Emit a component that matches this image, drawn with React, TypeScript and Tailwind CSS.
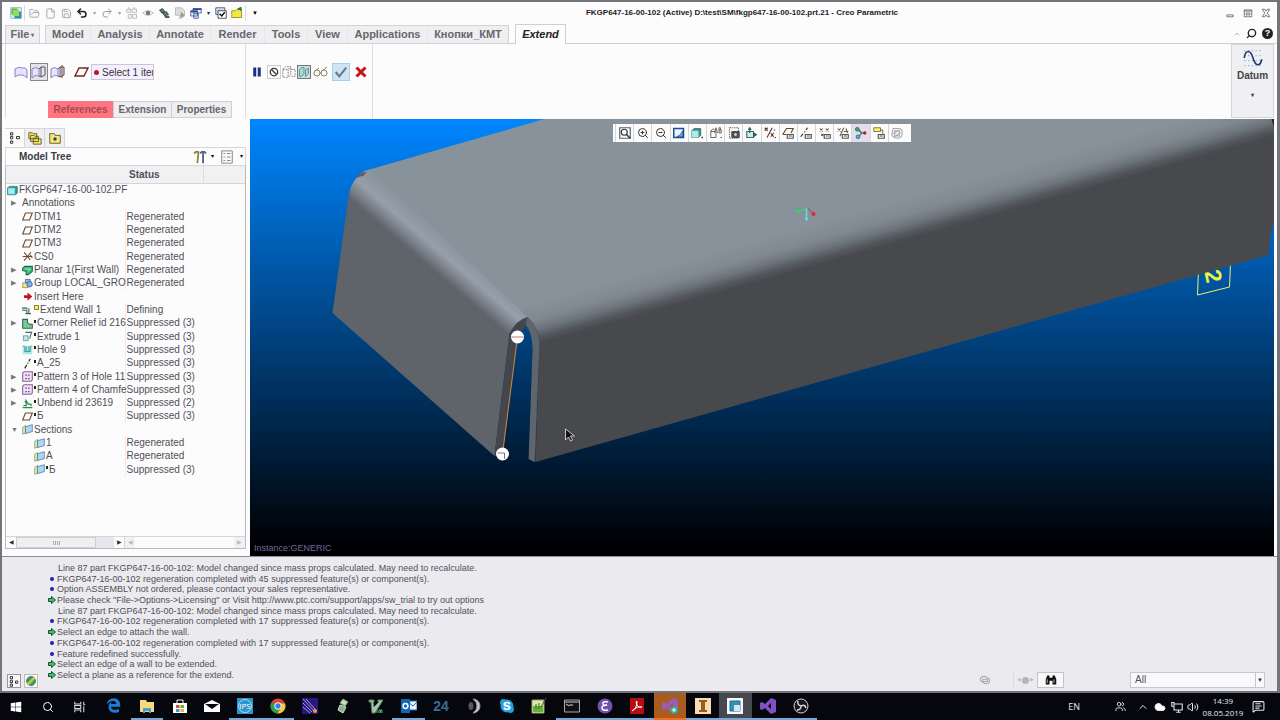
import React from 'react';
import clsx from 'clsx';
import { FaWindows, FaSkype, FaEdgeLegacy } from 'react-icons/fa';
import { Search, ChevronUp, Cloud, Volume2, Users, MessageSquareText, ZoomIn, ZoomOut, Undo2, Redo2, File, Save, FolderOpen } from 'lucide-react';

type IconProps = { children: React.ReactNode; className?: string };

function Icon({ children, className = 'h-4 w-4' }: IconProps) {
  return (
    <svg viewBox="0 0 16 16" fill="none" stroke="#333" strokeWidth="1" className={clsx('shrink-0', className)} aria-hidden="true">
      {children}
    </svg>
  );
}

/* ---------- title bar ---------- */

const Divider = () => <span className="h-4 w-px bg-[#dcdce0]" />;

function QuickAccess() {
  const btn = 'flex h-4 w-4 items-center justify-center';
  const caret = 'w-[9px] text-center text-[6px]';
  return (
    <div className="flex items-center">
      <button aria-label="Window" className={clsx(btn, 'ml-px')}>
        <Icon className="h-3 w-3">
          <rect x="1" y="1" width="14" height="14" fill="#dcecf5" stroke="#7fa3c4" />
          <path d="M2 2h8v8H2z" fill="#5fb52f" stroke="none" />
          <path d="M6 6h9v9H6z" fill="#2b9c9c" stroke="none" />
          <path d="M4 4h8v8H4z" fill="#98d86a" stroke="none" />
        </Icon>
      </button>
      <Divider />
      <button aria-label="Open" className={clsx(btn, 'ml-px')}><FolderOpen size={11} color="#a3a3a3" /></button>
      <button aria-label="New" className={btn}><File size={11} color="#a3a3a3" /></button>
      <button aria-label="Save" className={btn}><Save size={11} color="#a3a3a3" /></button>
      <button aria-label="Undo" className={btn}><Undo2 size={12} color="#222" strokeWidth={3} /></button>
      <span className={clsx(caret, 'text-gray-400')}>▾</span>
      <button aria-label="Redo" className={btn}><Redo2 size={12} color="#999" /></button>
      <span className={clsx(caret, 'text-gray-400')}>▾</span>
      <button aria-label="Regenerate" className={btn}>
        <Icon className="h-3 w-3"><path d="M1 3h5v4H1zM8 3h6v4H8zM3 10h4v5H3zM9 10h5v5H9zM4 0v3M11 0v3" stroke="#aaa" /></Icon>
      </button>
      <button aria-label="Hide" className={btn}>
        <Icon className="h-3 w-3"><path d="M1 8q7-6 14 0q-7 6-14 0z" stroke="#aaa" /><circle cx="8" cy="8" r="3" fill="#777" stroke="none" /></Icon>
      </button>
      <button aria-label="Layers" className={btn}>
        <Icon className="h-3 w-3"><path d="M2 4l4-2 3 4-4 2zM6 8l5-2 3 4-5 2zM9 13l5-1 1 2h-5z" fill="#5d7a74" stroke="#2c3634" /></Icon>
      </button>
      <button aria-label="Edit" className={btn}>
        <Icon className="h-3 w-3"><path d="M2 1h8l4 4v7l-5 3H7l2-4H2z" fill="#ddd" stroke="#aaa" /><path d="M9 6l5 5-5 4z" fill="#999" stroke="none" /></Icon>
      </button>
      <button aria-label="Windows" className={btn}>
        <Icon className="h-3 w-3"><path d="M4 2h11v6H4zM1 5h9v7H1zM5 9h6v6H5z" fill="#e8f0ff" stroke="#294a8a" /><path d="M4 2h11v2H4zM1 5h9v2H1z" fill="#294a8a" stroke="none" /></Icon>
      </button>
      <span className={clsx(caret, 'text-gray-800')}>▾</span>
      <button aria-label="Close window" className={btn}>
        <Icon className="h-3 w-3"><path d="M1 1h12v9H1z" fill="#cfe0f5" stroke="#345" /><path d="M4 5h11v10H4z" fill="#fff" stroke="#222" /><path d="M6 9l3 3 4-5" stroke="#111" strokeWidth="2" /></Icon>
      </button>
      <button aria-label="Working directory" className={btn}>
        <Icon className="h-3 w-3"><path d="M1 5h5l2-2h6v11H1z" fill="#f3e64a" stroke="#8a7c12" /><path d="M9 3l4-2v4" stroke="#287a28" strokeWidth="2" /></Icon>
      </button>
      <Divider />
      <button aria-label="Customize" className="ml-1.5 text-[6px] text-black">▼</button>
    </div>
  );
}

function TitleBar() {
  return (
    <header className="grid h-[22px] grid-cols-[1fr_auto_1fr] items-center pl-[5px]">
      <QuickAccess />
      <h1 className="pl-[200px] text-[8px] font-bold whitespace-nowrap text-[#222]">
        FKGP647-16-00-102 (Active) D:\test\SM\fkgp647-16-00-102.prt.21 - Creo Parametric
      </h1>
      <div className="flex justify-end gap-2 pr-1.5">
        <button aria-label="Minimize"><Icon className="h-2.5 w-2.5"><path d="M3 11h10v3H3z" /></Icon></button>
        <button aria-label="Restore"><Icon className="h-2.5 w-2.5"><path d="M2 3h12v11H2zM2 5h12M5 8h6v3H5z" /></Icon></button>
        <button aria-label="Close"><Icon className="h-2.5 w-2.5"><path d="M2 2h4l2 3 2-3h4l-4 6 4 6h-4l-2-3-2 3H2l4-6z" /></Icon></button>
      </div>
    </header>
  );
}

/* ---------- ribbon ---------- */

const TABS = [
  { label: 'Model', width: 'w-[45px]' },
  { label: 'Analysis', width: 'w-[59px]' },
  { label: 'Annotate', width: 'w-[61px]' },
  { label: 'Render', width: 'w-[54px]' },
  { label: 'Tools', width: 'w-[43px]' },
  { label: 'View', width: 'w-[40px]' },
  { label: 'Applications', width: 'w-[80px]' },
  { label: 'Кнопки_КМТ', width: 'w-[80px]' },
];

function TabBar() {
  return (
    <nav className="flex h-5 items-end border-b border-[#cfcfd2] pl-[3px] text-[11px] font-bold text-[#66666c]">
      <button className="h-[18px] w-[35px] border border-b-0 border-[#d3d3d6] bg-[#efeff1]">
        File<span className="ml-0.5 align-middle text-[6px]">▾</span>
      </button>
      <div className="ml-[5px] flex border border-b-0 border-[#d3d3d6] bg-[#efeff1]">
        {TABS.map((tab) => (
          <button key={tab.label} className={clsx('h-[17px] border-r border-[#e6e6e9] whitespace-nowrap last:border-r-0', tab.width)}>
            {tab.label}
          </button>
        ))}
      </div>
      <button className="-mb-px ml-1.5 h-5 w-[51px] border border-b-0 border-[#cfcfd2] bg-[#fcfcfc] text-[#222] italic">Extend</button>
      <div className="ml-auto flex items-center gap-[5px] self-center pr-1">
        <ChevronUp size={8} color="#999" />
        <button aria-label="Search"><Search size={11} color="#222" strokeWidth={3} className="-scale-x-100" /></button>
        <button aria-label="Help" className="flex h-[11px] w-[11px] items-center justify-center rounded-full bg-[#222] text-[9px] text-white">?</button>
      </div>
    </nav>
  );
}

function SurfaceIcon({ variant }: { variant: number }) {
  return (
    <Icon>
      <path d={variant === 0 ? 'M2 5q4-3 7-1 4-1 5 2v8q-3-3-5-3-4-1-7 2z' : 'M1 5q4-3 7 0v7q-4-2-7 2z'} fill="#e6e2ff" stroke="#8a80c4" />
      {variant > 0 && <path d="M10 3h4v8l-4 2zM8 5l2-2M8 12l2 1" fill="#e8e6ee" stroke="#55505c" />}
      {variant === 2 && <path d="M12 1v13" stroke="#7a4a3a" />}
    </Icon>
  );
}

function Ribbon() {
  return (
    <section className="flex h-[74px] pl-[3px]">
      <div className="flex w-[241px] flex-col justify-between border-r border-l border-[#dedee2]">
        <div className="mt-[19px] flex h-[18px] items-center pl-[6px]">
          <button aria-label="Along original surface" className="flex h-[18px] w-[18px] items-center justify-center"><SurfaceIcon variant={0} /></button>
          <button aria-label="To reference" className="flex h-[18px] w-[18px] items-center justify-center border border-[#888] bg-[#e4e2e6]"><SurfaceIcon variant={1} /></button>
          <button aria-label="Offset" className="ml-px flex h-[18px] w-[18px] items-center justify-center"><SurfaceIcon variant={2} /></button>
          <Icon className="ml-[6px] h-4 w-4"><path d="M2 12L6 4h9l-4 8z" stroke="#6b2a1e" strokeWidth="1.4" /></Icon>
          <div className="ml-[2px] flex h-4 w-[63px] items-center border border-[#c9c4da] bg-[#f4f0ff] pl-[2px]">
            <span className="h-[5px] w-[5px] shrink-0 rounded-full bg-[#c01820]" />
            <input aria-label="Reference plane" readOnly value="Select 1 item" className="ml-[3px] w-full min-w-0 text-[10px] text-[#333] outline-none" />
          </div>
        </div>
        <div className="flex h-[17px] pl-[42px] text-[10px] font-bold text-[#66666c]">
          <button className="w-[65px] bg-[#ff7480] text-[#a54a52]">References</button>
          <button className="w-[59px] border border-[#d0d0d4] bg-[#efeff1]">Extension</button>
          <button className="w-[60px] border border-l-0 border-[#d0d0d4] bg-[#efeff1]">Properties</button>
        </div>
      </div>
      <div className="flex w-[127px] border-r border-[#dedee2] pt-[19px] pl-[3px]">
        <button aria-label="Pause" className="flex h-[18px] w-4 items-center justify-center">
          <Icon className="h-3 w-3"><path d="M3 2h4v12H3zM9 2h4v12H9z" fill="#1c2f80" stroke="none" /></Icon>
        </button>
        <button aria-label="No preview" className="ml-[2px] mt-[2px] flex h-3.5 w-3.5 items-center justify-center border border-[#ccc]">
          <Icon className="h-2.5 w-2.5"><circle cx="8" cy="8" r="6" strokeWidth="2" /><path d="M4 4l8 8" strokeWidth="2" /></Icon>
        </button>
        <button aria-label="Unattached preview" className="flex h-[18px] w-4 items-center justify-center">
          <Icon className="h-3.5 w-3.5"><path d="M1 5l3-3h6v9l-3 3H1zM10 5h5v8h-5M1 5h6v9M7 5l3-3" stroke="#777" strokeDasharray="2 1" /></Icon>
        </button>
        <button aria-label="Attached preview" className="mt-[2px] flex h-3.5 w-3.5 items-center justify-center border border-[#777] bg-[#c9dedf]">
          <Icon className="h-3 w-3"><path d="M2 5l3-3h3v9l-4 3H2zM10 5l4-2v7l-4 4z" fill="#a4dcdc" stroke="#4c8080" /></Icon>
        </button>
        <button aria-label="Verify" className="ml-[2px] flex h-[18px] w-4 items-center justify-center">
          <Icon><circle cx="4" cy="9" r="3" stroke="#8d8163" /><circle cx="11" cy="9" r="3" stroke="#8d8163" /><path d="M2 7l4-3M9 7l5-4M7 9h1" stroke="#8d8163" /></Icon>
        </button>
        <button aria-label="OK" className="ml-[3px] flex h-[18px] w-[18px] items-center justify-center border border-[#a9cfe8] bg-[#cfe5f5]">
          <Icon className="h-3.5 w-3.5"><path d="M2 8l4 5 8-10" stroke="#68798c" strokeWidth="2.4" /></Icon>
        </button>
        <button aria-label="Cancel" className="ml-[3px] flex h-[18px] w-4 items-center justify-center">
          <Icon className="h-3 w-3"><path d="M2 2l12 12M14 2L2 14" stroke="#c4141c" strokeWidth="4" /></Icon>
        </button>
      </div>
      <button className="mr-[3px] ml-auto flex w-[43px] flex-col items-center border border-[#d6d6da] bg-[#f0f0f2] pt-[3px] text-[10px] font-bold text-[#44444c]">
        <Icon className="h-5 w-5">
          <path d="M1 2h14M1 6h14M1 10h14M1 14h14" stroke="#9bb0d8" strokeDasharray="1 2" />
          <path d="M1 8C2 1 6 1 8 8s6 7 7 1" stroke="#1e3c72" strokeWidth="1.3" />
        </Icon>
        <span className="leading-[15px]">Datum</span>
        <span className="mt-2 text-[6px]">▾</span>
      </button>
    </section>
  );
}

/* ---------- model tree ---------- */

type Row = { icon: string; name: string; status?: string; indent?: number; arrow?: 'closed' | 'open'; suppressed?: boolean };

const ROWS: Row[] = [
  { icon: 'part', name: 'FKGP647-16-00-102.PF', indent: 0 },
  { icon: '', name: 'Annotations', arrow: 'closed' },
  { icon: 'plane', name: 'DTM1', status: 'Regenerated' },
  { icon: 'plane', name: 'DTM2', status: 'Regenerated' },
  { icon: 'plane', name: 'DTM3', status: 'Regenerated' },
  { icon: 'csys', name: 'CS0', status: 'Regenerated' },
  { icon: 'wall', name: 'Planar 1(First Wall)', status: 'Regenerated', arrow: 'closed' },
  { icon: 'group', name: 'Group LOCAL_GRO', status: 'Regenerated', arrow: 'closed' },
  { icon: 'insert', name: 'Insert Here' },
  { icon: 'extend', name: 'Extend Wall 1', status: 'Defining' },
  { icon: 'relief', name: 'Corner Relief id 216', status: 'Suppressed (3)', arrow: 'closed', suppressed: true },
  { icon: 'extrude', name: 'Extrude 1', status: 'Suppressed (3)', suppressed: true },
  { icon: 'hole', name: 'Hole 9', status: 'Suppressed (3)', suppressed: true },
  { icon: 'axis', name: 'A_25', status: 'Suppressed (3)', suppressed: true },
  { icon: 'pattern', name: 'Pattern 3 of Hole 11', status: 'Suppressed (3)', arrow: 'closed', suppressed: true },
  { icon: 'pattern', name: 'Pattern 4 of Chamfe', status: 'Suppressed (3)', arrow: 'closed', suppressed: true },
  { icon: 'unbend', name: 'Unbend id 23619', status: 'Suppressed (2)', arrow: 'closed', suppressed: true },
  { icon: 'plane', name: 'Б', status: 'Suppressed (3)', suppressed: true },
  { icon: 'section', name: 'Sections', arrow: 'open' },
  { icon: 'section', name: '1', status: 'Regenerated', indent: 2 },
  { icon: 'section', name: 'А', status: 'Regenerated', indent: 2 },
  { icon: 'section', name: 'Б', status: 'Suppressed (3)', indent: 2, suppressed: true },
];

const TREE_ICONS: Record<string, React.ReactNode> = {
  part: <><path d="M1 4l3-2h11v10l-3 2H1z" fill="#2a9aa0" stroke="#216f75" /><path d="M1 4h11v10H1z" fill="#9af0f0" stroke="#2a8a90" /></>,
  plane: <path d="M1 13L5 3h10l-4 10z" stroke="#6b4a2e" strokeWidth="1.6" />,
  csys: <path d="M1 8h14M8 8L3 2M8 8l5-6M8 8l-5 6M8 8l4 5M12 6l3 4" stroke="#6b4a2e" strokeWidth="1.5" />,
  wall: <><path d="M1 5l3-3h11v7l-6 5H6V9L1 8z" fill="#3fc080" stroke="#1c6a3c" strokeWidth="1.5" /><path d="M4 6h8M9 9l3-3" stroke="#d4f4e0" /></>,
  group: <><path d="M1 7h8v7H1z" fill="#f4e48a" stroke="#8a7c20" /><path d="M5 2h7v5H5z" fill="#9ab8f0" stroke="#2c4a9a" /><circle cx="11" cy="9" r="4" fill="#7ab0e0" stroke="#2c4a9a" /></>,
  insert: <path d="M3 6h5V2l7 6-7 6v-4H3z" fill="#c0141c" stroke="none" />,
  extend: <path d="M0 6h8M0 9h6M10 6v8M7 8v6M5 14h8" stroke="#3b6650" strokeWidth="1.6" />,
  relief: <path d="M1 2h7v5q2 3 5 2h2v6H1z" fill="#7cc79a" stroke="#2c6a44" strokeWidth="1.5" />,
  extrude: <><path d="M5 2h9l-3 9" stroke="#3b6a6a" strokeWidth="1.5" /><path d="M2 7h7v7H2z" fill="#bfe8e8" stroke="#3b8a8a" /></>,
  hole: <><path d="M1 3h14v12H1z" fill="#a4ecec" stroke="none" /><path d="M4 4v7h8V4M6 3v8M10 3v8M1 3h3M12 3h3" stroke="#2c7a80" /></>,
  axis: <path d="M4 15l3-5M8 8l1-1M10 5l2-4" stroke="#3a2a1a" strokeWidth="1.8" />,
  pattern: <><path d="M1 3l2-2h12v12l-2 2H1z" fill="#efe2f4" stroke="#8a5a9a" strokeWidth="1.5" /><path d="M5 6h2M9 6h2M5 11h2M9 11h2" stroke="#6a2a7a" strokeWidth="2" /></>,
  unbend: <path d="M1 14h14M2 11h4V4l3 5h4v3M6 4L4 6" stroke="#2c8a4a" strokeWidth="1.8" />,
  section: <><path d="M1 5l4-3v11l-4 2z" fill="#e0f0b0" stroke="#7a8a4a" /><path d="M5 4l10-3v10L5 14z" fill="#a8d8f4" stroke="#3c6a9a" /></>,
};

function TreeRow({ row }: { row: Row }) {
  const level = row.indent ?? 1;
  return (
    <tr>
      <td className="p-0">
        <div className={clsx('flex items-center whitespace-nowrap', level === 0 && 'pl-px', level === 1 && 'pl-[5px]', level === 2 && 'pl-[28px]')}>
          {level === 1 && <span className="w-[11px] shrink-0 text-[7px] text-[#777]">{row.arrow === 'closed' ? '▶' : row.arrow === 'open' ? '▼' : ''}</span>}
          {row.icon && <Icon className="mr-px h-[11px] w-[11px]">{TREE_ICONS[row.icon]}</Icon>}
          {row.icon === 'extend' && <span className="-mt-1 mr-px h-[5px] w-[5px] shrink-0 border border-[#8a8a20] bg-[#f4f060]" />}
          {row.suppressed && <span className="-mt-1 mr-px h-[3px] w-[2px] shrink-0 bg-[#222]" />}
          {row.name}
        </div>
      </td>
      <td className={clsx('p-0 pl-px whitespace-nowrap', row.status && 'border-l border-[#ececf0]')}>{row.status}</td>
      <td className="p-0" />
    </tr>
  );
}

function ModelTree() {
  return (
    <aside className="flex w-[248px] shrink-0 flex-col pr-[4px] pb-[7px] pl-[3px] text-[10px] text-[#505058]">
      <div className="mt-[10px] flex h-[19px]">
        <button aria-label="Model tree" className="flex w-5 items-center justify-center border-t border-r border-[#d6d6da]">
          <Icon className="h-3 w-3"><path d="M2 1h3v3H2zM2 6h3v3H2zM2 12h3v3H2zM10 6h4v3h-4z" strokeWidth="1.3" /></Icon>
        </button>
        <button aria-label="Folders" className="flex w-5 items-center justify-center border-t border-r border-[#d6d6da] bg-[#efeff1]">
          <Icon className="h-3.5 w-3.5"><path d="M1 2h4l1 1h4v6H1zM3 5h4l1 1h4v6H3zM6 8h4l1 1h4v6H6z" fill="#f4ea70" stroke="#5c5420" /></Icon>
        </button>
        <button aria-label="Favorites" className="flex w-5 items-center justify-center border-t border-r border-[#d6d6da] bg-[#efeff1]">
          <Icon className="h-3.5 w-3.5"><path d="M2 3h5l1 2h6v9H2z" fill="#f4ea70" stroke="#5c5420" /><circle cx="8" cy="9" r="2" fill="#333a80" stroke="none" /></Icon>
        </button>
      </div>
      <div className="flex h-[19px] items-center border border-[#d6d6da] pl-[13px]">
        <h2 className="font-bold text-[#3c3c44]">Model Tree</h2>
        <button aria-label="Settings" className="ml-auto flex items-center gap-1 text-[6px] text-black">
          <Icon className="h-3.5 w-3.5"><path d="M2 2h4v3l-1 10M1 4l3-2" stroke="#8a8a3a" strokeWidth="2" /><path d="M8 4l2-2h3l2 2M11.500 3v12" stroke="#4c5a80" strokeWidth="2" /></Icon>▾
        </button>
        <button aria-label="Show" className="ml-[6px] flex items-center gap-1.5 pr-0.5 text-[6px] text-black">
          <Icon className="h-3.5 w-3.5"><path d="M2 1h12v14H2zM4 4h2M8 4h4M4 8h2M8 8h4M4 12h2M8 12h4" stroke="#777" /></Icon>▾
        </button>
      </div>
      <div className="flex flex-1 flex-col border-x border-b border-[#b9b9bd]">
        <table className="w-full table-fixed border-collapse">
          <thead>
            <tr className="h-[17px] border-b border-[#d6d6da] bg-[#f1f1f3]">
              <th className="w-[119px] p-0" aria-label="Name" />
              <th className="w-[78px] p-0 pt-[2px] pl-[4px] text-left leading-[14px]">Status</th>
              <th className="border-l border-[#dedee2] p-0" aria-label="Empty" />
            </tr>
          </thead>
        </table>
        <table className="h-[293px] w-full table-fixed border-collapse leading-[12px]">
          <colgroup>
            <col className="w-[119px]" />
            <col className="w-[78px]" />
            <col />
          </colgroup>
          <tbody>
            {ROWS.map((row) => <TreeRow key={row.icon + row.name} row={row} />)}
          </tbody>
        </table>
        <div className="mt-auto flex h-[12px] border-t border-[#d6d6da] text-[6px] text-[#333]">
          <button aria-label="Scroll left" className="w-[10px]">◀</button>
          <div className="flex w-[80px] items-center justify-center gap-px border border-[#cfcfd3] bg-[#f0f0f2]">
            {[0, 1, 2, 3].map((n) => <span key={n} className="h-1 w-px bg-[#aaa]" />)}
          </div>
          <div className="w-[18px] bg-[#e6e6ec]" />
          <button aria-label="Scroll right" className="w-[11px] border-r border-[#d6d6da]">▶</button>
          <button aria-label="Scroll left" className="w-[10px] bg-[#f1f1f3] text-[#bbb]">◀</button>
          <div className="flex-1" />
          <button aria-label="Scroll right" className="w-[11px] bg-[#f1f1f3] text-[#bbb]">▶</button>
        </div>
      </div>
    </aside>
  );
}

/* ---------- graphics area ---------- */

const EYE = <path d="M7 10h8v5H7zM9 12h4" stroke="#555" strokeWidth="1.6" />;

const VIEW_TOOLS: { label: string; icon: React.ReactNode; active?: boolean }[] = [
  { label: 'Refit', icon: <><path d="M1 1h14v14H1z" stroke="#55606c" strokeWidth="1.5" /><circle cx="7" cy="7" r="4" stroke="#333" strokeWidth="1.5" /><path d="M10 10l5 5" strokeWidth="2" /></> },
  { label: 'Zoom in', icon: <ZoomIn size={16} color="#333" /> },
  { label: 'Zoom out', icon: <ZoomOut size={16} color="#333" /> },
  { label: 'Repaint', icon: <><path d="M1 2h13v12H1z" fill="#eaf4ff" stroke="#1e4a9a" strokeWidth="2" /><path d="M5 13q5-1 8-8v8z" fill="#6aa8e0" stroke="#1e4a9a" /></> },
  { label: 'Display style', icon: <><path d="M1 5l3-3h9v9l-3 3H1z" fill="#3c8f88" stroke="#356b68" /><path d="M1 5h9v9H1z" fill="#b0ece6" stroke="none" /><path d="M14 14h2" strokeWidth="2" /></> },
  { label: 'Saved orientations', icon: <path d="M1 6h7v8H1zM1 6l2-3h3M6 8l2-7 2 7M12 1h2v3h-2zM12 4h3v4h-3zM14 14h2" stroke="#666" strokeWidth="1.3" /> },
  { label: 'View manager', icon: <><path d="M2 1h12v14H2z" stroke="#777" strokeDasharray="2 1" strokeWidth="1.5" /><path d="M5 6h10v8H5z" fill="#555" /><circle cx="10" cy="10" r="2.5" fill="#ddd" /></> },
  { label: 'Perspective', icon: <><path d="M1 6h9v8H1z" fill="#d0eee8" stroke="#3b6a60" strokeWidth="1.4" /><path d="M5 8V1M3 4l2-3 2 3" stroke="#235a50" strokeWidth="1.4" /><path d="M10 7l5 3-5 4z" fill="#235a50" stroke="none" /></> },
  { label: 'Datum display', icon: <path d="M1 1l4 4M5 1L1 5M11 1L4 14M9 8l4 5M13 8l-4 5M14 14h2M13 4h2" stroke="#5e3a2c" strokeWidth="1.5" /> },
  { label: 'Planes', icon: <><path d="M1 10l5-8h9l-3 6M1 10h5" stroke="#6b4a2e" strokeWidth="1.6" />{EYE}</> },
  { label: 'Axes', icon: <><path d="M1 13l3-4M6 7l1-1M8 4l2-3" stroke="#3a2a1a" strokeWidth="1.6" />{EYE}</> },
  { label: 'Points', icon: <><path d="M1 2l4 4M5 2L1 6M9 2l4 4M13 2L9 6M3 9l3 3M6 9l-3 3" stroke="#6b4a2e" strokeWidth="1.4" />{EYE}</> },
  { label: 'Coordinate systems', icon: <><path d="M1 2l4 4M5 2L1 6M9 1L4 12M9 6h6M12 2l2 6" stroke="#6b5a3e" strokeWidth="1.4" />{EYE}</> },
  { label: 'Spin center', active: true, icon: <><path d="M5 4l4 4M5 13l4-5h5" stroke="#355" strokeWidth="1.5" /><circle cx="3" cy="3" r="2.5" fill="#2cae6a" stroke="#1a6a3c" /><circle cx="4" cy="13" r="2.5" fill="#3cc0c8" stroke="#1a6a7a" /><circle cx="13" cy="8" r="2.2" fill="#b01838" stroke="none" /></> },
  { label: 'Annotations', icon: <><path d="M1 1h9v5H1z" fill="#f4f080" stroke="#8a7c20" strokeWidth="1.3" /><path d="M10 4h3v5" />{EYE}</> },
  { label: 'Simulate', icon: <path d="M3 2h7q5 0 5 6t-6 7q-6 0-8-5zM5 5h6v7H5zM3 9l8-5M5 13l8-6" stroke="#aaa" strokeWidth="1.5" /> },
];

function SheetMetalPart() {
  return (
    <svg viewBox="250 119 1025 437" preserveAspectRatio="xMidYMid slice" className="absolute inset-0 h-full w-full" role="img" aria-label="Sheet metal part">
      <defs>
        <linearGradient id="sky" gradientUnits="userSpaceOnUse" x1="0" y1="119" x2="0" y2="545">
          <stop offset="0" stopColor="#0086ff" />
          <stop offset="1" stopColor="#000003" />
        </linearGradient>
        <linearGradient id="sideBend" gradientUnits="userSpaceOnUse" x1="429" y1="266" x2="453" y2="238">
          <stop offset="0" stopColor="#5f646a" />
          <stop offset="0.25" stopColor="#7c838c" />
          <stop offset="0.5" stopColor="#969fac" />
          <stop offset="0.75" stopColor="#8e98a3" />
          <stop offset="1" stopColor="#87929a" />
        </linearGradient>
        <linearGradient id="frontBend" gradientUnits="userSpaceOnUse" x1="800" y1="228" x2="811" y2="267">
          <stop offset="0" stopColor="#87929a" />
          <stop offset="0.4" stopColor="#808992" />
          <stop offset="0.65" stopColor="#6c737b" />
          <stop offset="0.85" stopColor="#53575c" />
          <stop offset="1" stopColor="#47494d" />
        </linearGradient>
      </defs>
      <rect x="250" y="119" width="1025" height="437" fill="url(#sky)" />
      <path d="M1199 270l-1 25 32-8 1-24" fill="none" stroke="#e8f070" />
      <text x="1214" y="276" textAnchor="middle" dominantBaseline="central" fontSize="23" fontWeight="bold" fill="#f0f43c" transform="rotate(78 1214 276)">2</text>
      <path d="M365 171L545 119H1275V219L1271 236L1269 255L536 462L540 340L528 317L380 200z" fill="url(#frontBend)" />
      <path d="M372 169L365 171Q351 180 349 197L333 313L495 456L510 333L528 317z" fill="url(#sideBend)" />
      <path d="M356 179q5-8 11-7l-3 4q-5 0-9 4z" fill="#62605e" />
      <path d="M1272 119h3v10z" fill="#222" />
      {/* corner slot */}
      <path d="M510 333Q517 320 528 317Q538 326 540 340L536 462L529 459L503 454L495 456z" fill="#43464d" />
      <path d="M528 317Q538 326 540 342L535 462L529 459L533 350Q533 332 526 324z" fill="#5d666e" />
      <path d="M526 326Q533 334 533 350L529 459V470H505L503 456L518 337z" fill="url(#sky)" />
      <path d="M518 337L503 454" stroke="#d08a34" />
      <circle cx="518" cy="337" r="6.5" fill="#fff" />
      <path d="M512 337h12" stroke="#c07a60" />
      <circle cx="503" cy="454" r="6.5" fill="#fff" />
      <path d="M498 453h7v6" fill="none" stroke="#777" />
      {/* spin center */}
      <path d="M807 208.500l-9 3" stroke="#3cd060" strokeWidth="1.5" />
      <path d="M795 211l5-2v4z" fill="#3cd060" />
      <path d="M807 208v10" stroke="#5ce0f0" strokeWidth="1.5" />
      <circle cx="807" cy="219" r="1.5" fill="#5ce0f0" />
      <path d="M808 208l6 6" stroke="#e02838" />
      <circle cx="814" cy="214" r="2" fill="#e02838" />
      <path d="M566 429v11l3-3 2 4 2-1-2-4h4z" fill="#111" stroke="#eee" strokeWidth="0.8" />
    </svg>
  );
}

function GraphicsArea() {
  return (
    <main className="relative mt-px mr-[3px] min-w-0 flex-1 overflow-hidden bg-black">
      <SheetMetalPart />
      <div role="toolbar" aria-label="View" className="absolute top-[5px] left-1/2 flex h-[18px] w-[298px] -translate-x-1/2 bg-[#fcfcfc] pr-[5px] pl-[2px]">
        {VIEW_TOOLS.map((tool) => (
          <button key={tool.label} aria-label={tool.label} className={clsx('flex flex-1 items-center justify-center border-l border-[#d6d6da]', tool.active && 'bg-[#e4dcea]')}>
            <Icon className="h-3 w-3">{tool.icon}</Icon>
          </button>
        ))}
      </div>
      <p className="absolute bottom-[2px] left-1 text-[9px] leading-[11px] text-[#6c6c98]">Instance:GENERIC</p>
    </main>
  );
}

/* ---------- messages ---------- */

const MESSAGES: { kind: 'line' | 'info' | 'prompt'; text: string }[] = [
  { kind: 'line', text: 'Line 87 part FKGP647-16-00-102: Model changed since mass props calculated. May need to recalculate.' },
  { kind: 'info', text: 'FKGP647-16-00-102 regeneration completed with 45 suppressed feature(s) or component(s).' },
  { kind: 'info', text: 'Option ASSEMBLY not ordered, please contact your sales representative.' },
  { kind: 'prompt', text: 'Please check "File->Options->Licensing" or Visit http://www.ptc.com/support/apps/sw_trial to try out options' },
  { kind: 'line', text: 'Line 87 part FKGP647-16-00-102: Model changed since mass props calculated. May need to recalculate.' },
  { kind: 'info', text: 'FKGP647-16-00-102 regeneration completed with 17 suppressed feature(s) or component(s).' },
  { kind: 'prompt', text: 'Select an edge to attach the wall.' },
  { kind: 'info', text: 'FKGP647-16-00-102 regeneration completed with 17 suppressed feature(s) or component(s).' },
  { kind: 'info', text: 'Feature redefined successfully.' },
  { kind: 'prompt', text: 'Select an edge of a wall to be extended.' },
  { kind: 'prompt', text: 'Select a plane as a reference for the extend.' },
];

function MessageArea() {
  return (
    <footer className="flex h-[135px] border-t border-[#8e8e92] bg-[#ebebef] pb-[3px]">
      <div className="flex w-[45px] shrink-0 items-end gap-[3px] pl-[5px]">
        <button aria-label="Toggle tree" className="flex h-3.5 w-3.5 items-center justify-center border border-[#999] bg-[#f8f8fa]">
          <Icon className="h-3 w-3"><path d="M3 2h3v3H3zM3 7h3v3H3zM3 12h3v3H3zM10 8h3v3h-3z" strokeWidth="1.3" /></Icon>
        </button>
        <button aria-label="Toggle browser" className="flex h-3.5 w-3.5 items-center justify-center border border-[#bbb] bg-[#f8f8fa]">
          <Icon className="h-3 w-3"><circle cx="8" cy="8" r="6" fill="#3c9cc8" stroke="#2c7a3c" /><path d="M3 13L13 3" stroke="#e0c820" strokeWidth="3" /><path d="M4 9q1-5 6-6M8 14q5-2 5-7" stroke="#3a9a3a" strokeWidth="2" /></Icon>
        </button>
      </div>
      <ul className="mt-[6px] flex h-[117px] flex-col justify-between text-[9px] leading-[10px] whitespace-nowrap text-[#505058]">
        {MESSAGES.map((msg, i) => (
          <li key={i} className="flex items-center">
            <span className={clsx('flex justify-center', msg.kind === 'line' ? 'w-[11px]' : 'w-[10px]')}>
              {msg.kind === 'info' && <span className="h-1 w-1 rounded-full bg-[#1c1cc0]" />}
              {msg.kind === 'prompt' && (
                <Icon className="h-2 w-2"><path d="M1 5h6V1l8 7-8 7v-4H1z" fill="#3cc080" stroke="#14502c" strokeWidth="2" /></Icon>
              )}
            </span>
            {msg.text}
          </li>
        ))}
      </ul>
      <div className="ml-auto flex items-end pr-3">
        <button aria-label="Regenerate" className="flex h-4 w-4 items-center justify-center">
          <Icon className="h-3 w-3"><path d="M2 9q-1-6 6-6l6 4M14 7q1 6-6 6L2 9M5 7h6v3H5z" stroke="#aaa" strokeWidth="1.6" /></Icon>
        </button>
        <span className="ml-5 flex h-4 w-6 items-center justify-center border-l border-[#dcdce0] text-[5px] text-[#bbb]">
          ◀<span className="mx-px h-[7px] w-[7px] rounded-full bg-[#b4b4b8]" />▶
        </span>
        <button aria-label="Find" className="flex h-4 w-[27px] items-center justify-center border border-[#c4c4c8] bg-[#f8f8fa]">
          <Icon className="h-3 w-3"><path d="M1 7l2-5h3v12H1zM15 7l-2-5h-3v12h5zM6 5h4v4H6z" fill="#111" stroke="none" /><path d="M3 12V7M12 12V7" stroke="#ddd" /></Icon>
        </button>
        <div className="relative ml-[66px] h-4 w-[135px]">
          <select aria-label="Selection filter" className="block h-full w-full appearance-none border border-[#c8c8cc] bg-[#f9f9fb] pl-1 text-[10px] leading-[14px] text-[#505058]">
            <option>All</option>
          </select>
          <span className="pointer-events-none absolute inset-y-px right-px flex w-[9px] items-center justify-center border-l border-[#c8c8cc] text-[6px] text-[#333]">▼</span>
        </div>
      </div>
    </footer>
  );
}

/* ---------- taskbar ---------- */

type App = { name: string; icon: React.ReactNode; open?: boolean; bg?: string };

const APPS: App[] = [
  { name: 'Edge', icon: <FaEdgeLegacy size={15} color="#1c7cd4" strokeWidth={0} /> },
  { name: 'Explorer', open: true, icon: <><path d="M1 2h6l1 2h7v10H1z" fill="#f5d97a" stroke="none" /><path d="M4 10h8v5h-2v-2H6v2H4z" fill="#4f9ed0" stroke="none" /></> },
  { name: 'Store', icon: <><path d="M1 5h14v10H1z" fill="#fff" stroke="none" /><path d="M5 5V2h6v3" stroke="#fff" /><path d="M4 7h3.500v3H4z" fill="#e04a2a" stroke="none" /><path d="M8.500 7H12v3H8.500z" fill="#6ab42c" stroke="none" /><path d="M4 11h3.500v3H4z" fill="#2c9ce0" stroke="none" /><path d="M8.500 11H12v3H8.500z" fill="#f0b428" stroke="none" /></> },
  { name: 'Mail', icon: <><path d="M0 6l8-4 8 4v8H0z" fill="#fff" stroke="none" /><path d="M1 6h14l-7 5z" fill="#05070d" stroke="none" /></> },
  { name: 'IPS', open: true, icon: <><path d="M0 0h16v16H0z" fill="#2c96cc" stroke="none" /><circle cx="8" cy="8" r="6.500" stroke="#a8dcf4" /><text x="8" y="11" textAnchor="middle" fontSize="8" fill="#fff" stroke="none">IPS</text></> },
  { name: 'Chrome', open: true, icon: <><circle cx="8" cy="8" r="7.500" fill="#e0402c" stroke="none" /><path d="M1.500 4.200A7.500 7.500 0 0 0 7.500 15.500L11 10 8 8z" fill="#2ca04c" stroke="none" /><path d="M15 5.500A7.500 7.500 0 0 1 7.500 15.500L11.500 9 8 5.500z" fill="#f8cc30" stroke="none" /><circle cx="8" cy="8" r="3.300" fill="#3c7ce8" stroke="#fff" /></> },
  { name: 'Comet', icon: <><path d="M0 0h16v16H0z" fill="#2a1680" stroke="none" /><path d="M1 1l11 12M4 1l9 10M1 5l9 9M1 9l7 6" stroke="#c8c0f0" strokeWidth="0.8" /><circle cx="13" cy="13" r="2" fill="#f0a020" stroke="none" /></> },
  { name: 'Cards', icon: <><path d="M8 1l5 3-3 4-5-3z" fill="#c4dcc4" stroke="#7c9c7c" /><path d="M5 7l6 2-3 6-5-3z" fill="#88b088" stroke="#d0dcd0" /></> },
  { name: 'Vim', icon: <><path d="M1 2h5v2H5l1 5 5-5h-1V2h5L7 15H4L3 4H1z" fill="#b4bcb4" stroke="#4c8a5c" /><path d="M9 11v4M11 15v-3h1.500v3M12.500 12H14v3" stroke="#4cb86c" /></> },
  { name: 'Outlook', open: true, icon: <><path d="M7 3h9v9H7z" fill="#e8f2fc" stroke="#1c6cc0" /><path d="M7 4l5 4 4-4" stroke="#1c6cc0" /><path d="M0 1h9v14H0z" fill="#1266b8" stroke="none" /><circle cx="4.500" cy="8" r="2.400" stroke="#fff" strokeWidth="1.500" /></> },
  { name: '24', icon: <text x="8" y="13" textAnchor="middle" fontSize="14" fontWeight="bold" fontFamily="Liberation Sans" fill="#3c6a94" stroke="none">24</text> },
  { name: 'Disc', icon: <><path d="M7 1a7 7 0 0 1 0 14q4-3 4-7T7 1z" fill="#c4c4c8" stroke="#999" /><ellipse cx="5" cy="8" rx="2.500" ry="4" fill="#55555a" stroke="none" /></> },
  { name: 'Skype', icon: <><circle cx="8" cy="8" r="5" fill="#fff" stroke="none" /><FaSkype size={16} color="#1ca4e4" strokeWidth={0} /></> },
  { name: 'Notepad', icon: <><path d="M1 2h12v13H1z" fill="#d8e8b0" stroke="#9a9a70" /><path d="M2 8h10v6H2z" fill="#5cb830" stroke="none" /><path d="M5 6v5M8 5v6M15 0l-5 9" stroke="#54542c" /></> },
  { name: 'Terminal', open: true, icon: <><path d="M0.500 2h15v12h-15z" fill="#111" stroke="#aaa" /><path d="M1 4h14" stroke="#ccc" /><path d="M2 6l3 2M5 7h4" stroke="#ddd" /></> },
  { name: 'Emacs', open: true, icon: <><circle cx="8" cy="8" r="7.500" fill="#7250b0" stroke="none" /><path d="M11 4q-6-1-5 2 1 2 4 1-5 0-5 3 0 3 6 2" stroke="#fff" strokeWidth="1.500" /></> },
  { name: 'Acrobat', open: true, icon: <><path d="M1 0h14v16H1z" fill="#b80c10" stroke="none" /><path d="M3 13q5-3 5-9 0-2-1 0 1 6 6 5-5-1-9 3z" stroke="#fff" /></> },
  { name: 'Visual Studio Installer', bg: 'bg-[#a85c20] border-b-[#f07020]', icon: <><path d="M11 0l5 2v12l-5 2-6-6-3 2-2-1V5l2-1 3 2zM11 5L8 8l3 3z" fill="#9a5cb8" fillRule="evenodd" stroke="none" /><circle cx="12" cy="12" r="3.500" fill="#2cb894" stroke="none" /><path d="M12 10v4M10 12h4" stroke="#fff" /></> },
  { name: 'Inventor', open: true, icon: <><path d="M0 0h16v16H0z" fill="#f8dcb4" stroke="none" /><path d="M4 2h8v2h-2v8h2v2H4v-2h2V4H4z" fill="#9a5a20" stroke="none" /></> },
  { name: 'Creo', open: true, bg: 'bg-[#45484e]', icon: <><path d="M0 0h16v16H0z" fill="#f4f8fa" stroke="none" /><path d="M3 3h10v10H3z" fill="#2c94b8" stroke="#2c6a8a" /><path d="M7 7h6v6H7z" fill="#d4e8f0" stroke="none" /></> },
  { name: 'Visual Studio', open: true, icon: <path d="M11 0l5 2v12l-5 2-6-6-3 2-2-1V5l2-1 3 2zM11 5L8 8l3 3z" fill="#8250c4" fillRule="evenodd" stroke="none" /> },
  { name: 'OBS', open: true, icon: <><circle cx="8" cy="8" r="7" fill="#18181c" stroke="#d4d4d8" /><path d="M8 8q-4-1-3-5M8 8q4-2 5 2M8 8q0 4-4 4" stroke="#d4d4d8" strokeWidth="1.500" /></> },
];

function Taskbar() {
  return (
    <nav className="flex h-[27px] items-stretch bg-[#05070d] font-['Open_Sans','Noto_Sans',sans-serif] text-white">
      <button aria-label="Start" className="flex w-8 items-center justify-center"><FaWindows size={12} /></button>
      <button aria-label="Search" className="flex w-8 items-center justify-center"><Search size={12} /></button>
      <button aria-label="Task view" className="flex w-8 items-center justify-center">
        <Icon className="h-3 w-3"><path d="M1 1v3h8V1M1 15v-3h8v3M1 6h8v4H1zM13 1v3M13 7v8M12 5h3" stroke="#ddd" strokeWidth="1.4" /></Icon>
      </button>
      <div className="ml-0.5 flex w-[719px] shrink-0">
        {APPS.map((app) => (
          <button
            key={app.name}
            aria-label={app.name}
            className={clsx('flex flex-1 items-center justify-center border-b-2', !app.bg?.includes('border-b') && (app.open ? 'border-b-[#76a8d8]' : 'border-b-transparent'), app.bg)}
          >
            <Icon className="h-4 w-4">{app.icon}</Icon>
          </button>
        ))}
      </div>
      <div className="ml-auto flex items-center text-[9px] text-[#e8e8ec]">
        <span>EN</span>
        <Users size={11} className="ml-[35px]" />
        <ChevronUp size={12} className="ml-[11px]" />
        <Cloud size={12} fill="#fff" className="ml-[5px]" />
        <Icon className="ml-[5px] h-3 w-3"><path d="M4 4h11v8H4zM7 15h6M10 12v3M1 2h3v5H1z" stroke="#e8e8ec" strokeWidth="1.4" /></Icon>
        <Volume2 size={12} className="ml-1" />
        <time className="ml-[3px] w-[42px] text-center text-[8px] leading-[12px]">14:39<br />08.05.2019</time>
        <MessageSquareText size={13} className="mr-[15px] ml-2" />
      </div>
    </nav>
  );
}

export default function App() {
  return (
    <div className="flex h-screen flex-col font-['Liberation_Sans',Arial,sans-serif]">
      <div className="flex min-h-0 flex-1 flex-col border-2 border-r-[3px] border-[#74747a] bg-[#fcfcfc]">
        <TitleBar />
        <TabBar />
        <Ribbon />
        <div className="flex min-h-0 flex-1">
          <ModelTree />
          <GraphicsArea />
        </div>
        <MessageArea />
      </div>
      <Taskbar />
    </div>
  );
}
